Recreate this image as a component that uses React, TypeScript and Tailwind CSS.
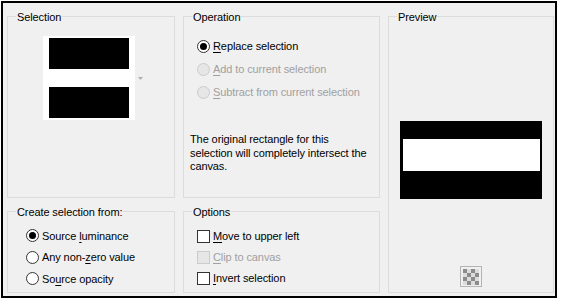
import type { ReactNode } from 'react'

const font = { fontFamily: '"Liberation Sans", Arial, sans-serif' }

function GroupBox({
  title,
  className,
  children,
}: {
  title: string
  className: string
  children?: ReactNode
}) {
  return (
    <div className={`relative border border-[#dcdcdc] ${className}`}>
      <span className="absolute left-[8px] top-[-7px] bg-[#f0f0f0] px-[1px] leading-[14px] text-black">
        {title}
      </span>
      {children}
    </div>
  )
}

function Radio({ checked, disabled }: { checked?: boolean; disabled?: boolean }) {
  return (
    <span
      className={`flex h-[13px] w-[13px] shrink-0 items-center justify-center rounded-full border ${
        disabled ? 'border-[#cccccc] bg-[#e6e6e6]' : 'border-[#333333] bg-white'
      }`}
    >
      {checked && <span className="h-[7px] w-[7px] rounded-full bg-black" />}
    </span>
  )
}

function Check({ disabled }: { disabled?: boolean }) {
  return (
    <span
      className={`h-[13px] w-[13px] shrink-0 border ${
        disabled ? 'border-[#cccccc] bg-[#e6e6e6]' : 'border-[#333333] bg-white'
      }`}
    />
  )
}

// label with one underlined access key
function Label({ text, at, disabled }: { text: string; at: number; disabled?: boolean }) {
  return (
    <span className={`whitespace-nowrap ${disabled ? 'text-[#a0a0a0]' : 'text-black'}`}>
      {text.slice(0, at)}
      <span className="underline underline-offset-[2px]">{text[at]}</span>
      {text.slice(at + 1)}
    </span>
  )
}

export default function App() {
  return (
    <div
      className="h-[304px] w-[563px] bg-white pl-[1px] pt-[1px] text-[11px] tracking-[-0.1px]"
      style={font}
    >
      <div className="flex h-[297px] w-[556px] gap-[8px] border-2 border-black bg-[#f0f0f0] pb-[3px] pl-[4px] pr-[1px] pt-[13px]">
        {/* Left column */}
        <div className="flex w-[168px] flex-col gap-[13px]">
          <GroupBox title="Selection" className="h-[182px]">
            <div className="ml-[35px] mt-[19px] flex items-center gap-[3px]">
              <div className="flex h-[84px] w-[92px] flex-col bg-white px-[6px] py-[2px]">
                <div className="h-[31px] bg-black" />
                <div className="h-[18px]" />
                <div className="h-[31px] bg-black" />
              </div>
              <svg width="5" height="3" viewBox="0 0 5 3">
                <path d="M0 0 L2.5 3 L5 0 Z" fill="#b0b0b0" />
              </svg>
            </div>
          </GroupBox>
          <GroupBox title="Create selection from:" className="h-[82px]">
            <div className="flex flex-col pl-[18px] pt-[13px]">
              <div className="flex h-[21.5px] items-center gap-[3px]">
                <Radio checked />
                <Label text="Source luminance" at={7} />
              </div>
              <div className="flex h-[21.5px] items-center gap-[3px]">
                <Radio />
                <Label text="Any non-zero value" at={8} />
              </div>
              <div className="flex h-[21.5px] items-center gap-[3px]">
                <Radio />
                <Label text="Source opacity" at={2} />
              </div>
            </div>
          </GroupBox>
        </div>

        {/* Middle column */}
        <div className="flex w-[197px] flex-col gap-[13px]">
          <GroupBox title="Operation" className="h-[182px]">
            <div className="flex flex-col pl-[13px] pt-[18px]">
              <div className="flex h-[23px] items-center gap-[3px]">
                <Radio checked />
                <Label text="Replace selection" at={0} />
              </div>
              <div className="flex h-[23px] items-center gap-[3px]">
                <Radio disabled />
                <Label text="Add to current selection" at={0} disabled />
              </div>
              <div className="flex h-[23px] items-center gap-[3px]">
                <Radio disabled />
                <Label text="Subtract from current selection" at={0} disabled />
              </div>
            </div>
            <p className="ml-[6px] mt-[29px] whitespace-nowrap leading-[13.5px] text-black">
              The original rectangle for this
              <br />
              selection will completely intersect the
              <br />
              canvas.
            </p>
          </GroupBox>
          <GroupBox title="Options" className="h-[82px]">
            <div className="flex flex-col pl-[13px] pt-[14px]">
              <div className="flex h-[21px] items-center gap-[3px]">
                <Check />
                <Label text="Move to upper left" at={0} />
              </div>
              <div className="flex h-[21px] items-center gap-[3px]">
                <Check disabled />
                <Label text="Clip to canvas" at={0} disabled />
              </div>
              <div className="flex h-[21px] items-center gap-[3px]">
                <Check />
                <Label text="Invert selection" at={0} />
              </div>
            </div>
          </GroupBox>
        </div>

        {/* Preview */}
        <GroupBox title="Preview" className="h-[277px] w-[166px]">
          <div className="ml-[11px] mt-[104px] h-[78px] w-[142px] bg-black pl-[3px] pt-[18px]">
            <div className="h-[32px] w-[137px] bg-white" />
          </div>
          <div className="ml-[71px] mt-[67px] flex h-[21px] w-[22px] items-center justify-center border border-[#b4b4b4] bg-[#f0f0f0]">
            <svg width="16" height="16" viewBox="0 0 16 16">
              <rect width="16" height="16" fill="#dcdcdc" />
              <rect x="0" y="0" width="4" height="4" fill="#8c8c8c" />
              <rect x="8" y="0" width="4" height="4" fill="#8c8c8c" />
              <rect x="4" y="4" width="4" height="4" fill="#8c8c8c" />
              <rect x="12" y="4" width="4" height="4" fill="#8c8c8c" />
              <rect x="0" y="8" width="4" height="4" fill="#8c8c8c" />
              <rect x="8" y="8" width="4" height="4" fill="#8c8c8c" />
              <rect x="4" y="12" width="4" height="4" fill="#8c8c8c" />
              <rect x="12" y="12" width="4" height="4" fill="#8c8c8c" />
            </svg>
          </div>
        </GroupBox>
      </div>
    </div>
  )
}
